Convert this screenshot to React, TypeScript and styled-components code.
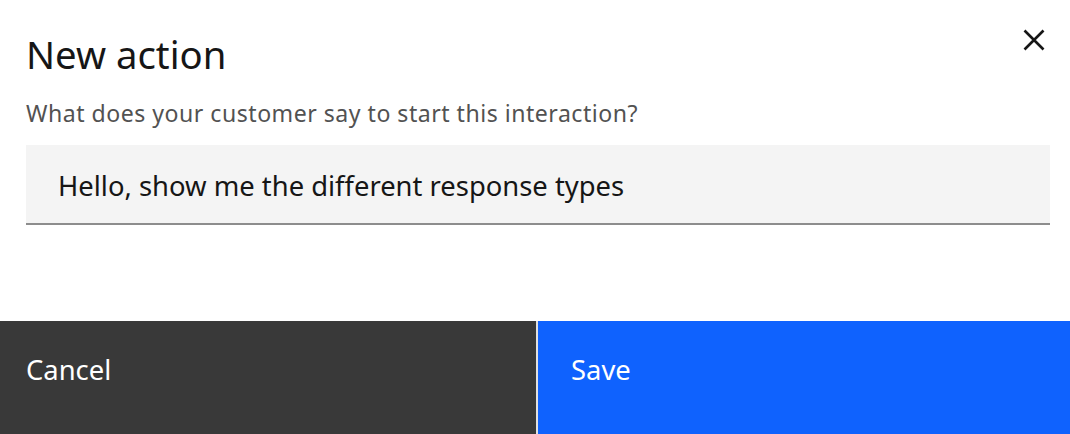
import React from "react";
import styled, { createGlobalStyle } from "styled-components";

const Global = createGlobalStyle`
  html, body { margin: 0; padding: 0; background: #ffffff; }
  * { box-sizing: border-box; }
`;

const FONT = `"Noto Sans", "Open Sans", sans-serif`;

const Modal = styled.div`
  width: 1070px;
  height: 434px;
  display: flex;
  flex-direction: column;
  background: #ffffff;
  font-family: ${FONT};
  color: #161616;
`;

const Header = styled.div`
  display: flex;
  align-items: flex-start;
  justify-content: space-between;
  padding: 26px 26px 0 26px;
`;

const Title = styled.h2`
  margin: 0;
  font-size: 38.3px;
  font-weight: 400;
  line-height: 56px;
  color: #161616;
`;

const CloseButton = styled.button`
  width: 40px;
  height: 40px;
  margin: -6px -10px 0 0;
  padding: 0;
  border: none;
  background: transparent;
  display: flex;
  align-items: center;
  justify-content: center;
  cursor: pointer;
`;

const Content = styled.div`
  padding: 17px 20px 0 26px;
  display: flex;
  flex-direction: column;
`;

const Label = styled.label`
  font-size: 23.1px;
  line-height: 28px;
  letter-spacing: 0.5px;
  color: #525252;
  margin-bottom: 18px;
`;

const Input = styled.input`
  width: 100%;
  height: 80px;
  border: none;
  border-bottom: 2px solid #8d8d8d;
  background: #f4f4f4;
  padding: 3px 32px 0 32px;
  font-family: ${FONT};
  font-size: 27.4px;
  color: #161616;
  outline: none;
`;

const Footer = styled.div`
  margin-top: auto;
  height: 113px;
  display: grid;
  grid-template-columns: 536px 1fr;
  column-gap: 2px;
  background: #e0e0e0;
`;

const ActionButton = styled.button<{ $kind: "secondary" | "primary" }>`
  border: none;
  margin: 0;
  height: 113px;
  text-align: left;
  padding: 33px 26px 0 ${(p) => (p.$kind === "primary" ? "33px" : "26px")};
  display: flex;
  align-items: flex-start;
  font-family: ${FONT};
  font-size: 27.4px;
  line-height: 32px;
  color: #ffffff;
  background: ${(p) => (p.$kind === "primary" ? "#0f62fe" : "#393939")};
  cursor: pointer;
`;

const CloseIcon = () => (
  <svg width="22" height="22" viewBox="0 0 22 22" aria-hidden="true">
    <path d="M1.5 1.5 L20.5 20.5 M20.5 1.5 L1.5 20.5" stroke="#161616" strokeWidth="2.6" fill="none" />
  </svg>
);

export default function App() {
  return (
    <>
      <Global />
      <Modal>
        <Header>
          <Title>New action</Title>
          <CloseButton aria-label="Close">
            <CloseIcon />
          </CloseButton>
        </Header>
        <Content>
          <Label htmlFor="utterance">What does your customer say to start this interaction?</Label>
          <Input id="utterance" defaultValue="Hello, show me the different response types" />
        </Content>
        <Footer>
          <ActionButton $kind="secondary">Cancel</ActionButton>
          <ActionButton $kind="primary">Save</ActionButton>
        </Footer>
      </Modal>
    </>
  );
}
